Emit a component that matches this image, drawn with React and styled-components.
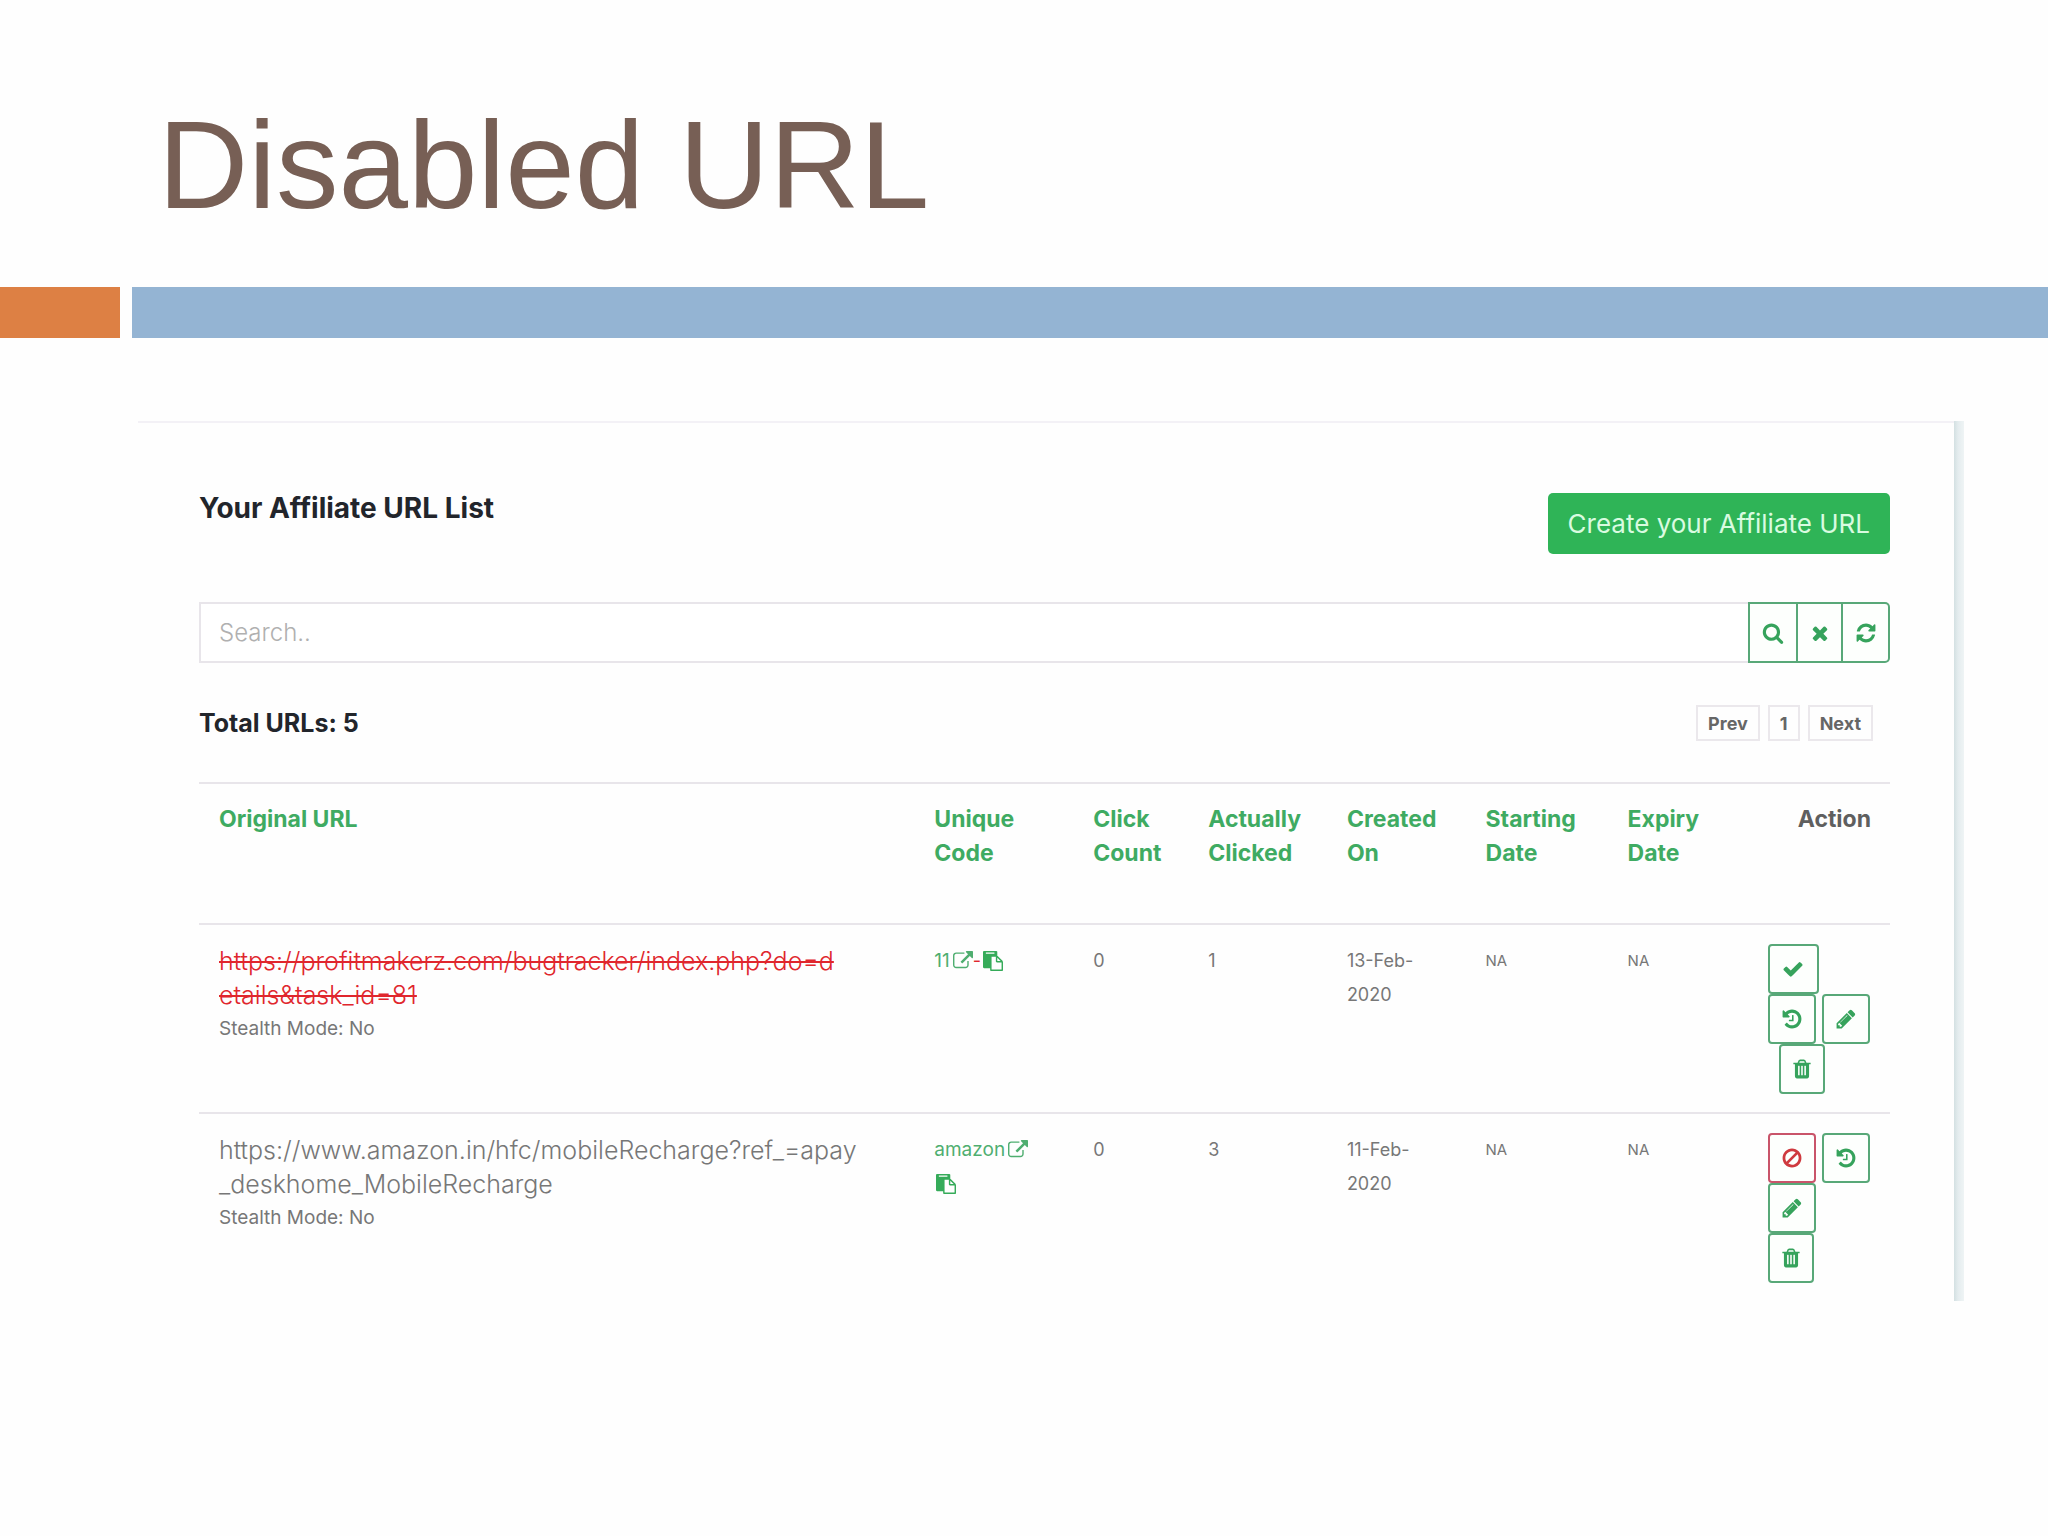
import React, { useState } from 'react';
import styled, { createGlobalStyle, css } from 'styled-components';

const GlobalStyle = createGlobalStyle`
  *, *::before, *::after {
    box-sizing: border-box;
  }

  body {
    margin: 0;
    background: #fefefe;
    color: #777777;
    font-family: Inter, 'Open Sans', sans-serif;
  }

  button, input {
    font-family: inherit;
    margin: 0;
  }
`;

const Title = styled.h1`
  margin: 0;
  padding: 93px 158px 50px;
  font-family: 'Liberation Sans', Arial, sans-serif;
  font-size: 125px;
  font-weight: 400;
  line-height: 144px;
  color: #775f55;
`;

const Stripe = styled.div`
  display: grid;
  grid-template-columns: 120px 1fr;
  gap: 12px;
  height: 51px;
`;

const StripeBlock = styled.div`
  background: ${props => props.$color};
`;

const Panel = styled.main`
  display: grid;
  grid-template-columns: 1fr 10px;
  margin: 83px 84px 60px 138px;
`;

const PanelContent = styled.section`
  padding: 70px 64px 0 61px;
  border-top: 2px solid #f3f1f6;
`;

const PanelEdge = styled.div`
  background: linear-gradient(to right, #d3e0e2, #e4ecee 40%, #eff4f5);
`;

const PanelHeader = styled.header`
  display: flex;
  align-items: flex-start;
  justify-content: space-between;
  margin-bottom: 48px;
`;

const Heading = styled.h2`
  margin: 0;
  font-size: ${props => props.$size}px;
  font-weight: 700;
  line-height: 30px;
  color: #22252b;
`;

const CreateButton = styled.button`
  height: 61px;
  padding: 0 20px;
  border: none;
  border-radius: 5px;
  background: #2fb457;
  color: #d9fbe0;
  font-size: 26px;
  cursor: pointer;
`;

const SearchBar = styled.form`
  display: flex;
  height: 61px;
  margin-bottom: 42px;
`;

const SearchInput = styled.input`
  flex: 1;
  min-width: 0;
  padding: 0 18px;
  border: 2px solid #e8e5ea;
  border-right: none;
  background: #ffffff;
  color: #555555;
  font-size: 24px;
  font-weight: 300;
  outline: none;

  &::placeholder {
    color: #b0b0b0;
    opacity: 1;
  }
`;

const SearchButton = styled.button`
  display: flex;
  align-items: center;
  justify-content: center;
  width: ${props => props.$width}px;
  padding: 0;
  border: 2px solid #58a878;
  border-left-width: ${props => (props.$first ? '2px' : '0')};
  border-radius: ${props => (props.$last ? '0 5px 5px 0' : '0')};
  background: #fdfffd;
  color: #36a35c;
  cursor: pointer;
`;

const Summary = styled.div`
  display: flex;
  align-items: center;
  justify-content: space-between;
  padding-right: 17px;
  margin-bottom: 41px;
`;

const Pager = styled.nav`
  display: flex;
  gap: 8px;
`;

const PageButton = styled.button`
  height: 36px;
  padding: 0 10px;
  border: 2px solid #ebe8ec;
  background: #fefefe;
  color: #666666;
  font-size: 18px;
  font-weight: 700;
  cursor: pointer;
`;

const Table = styled.table`
  width: 100%;
  table-layout: fixed;
  border-collapse: collapse;
`;

const Col = styled.col`
  width: ${props => props.$width};
`;

const HeadCell = styled.th`
  height: 141px;
  padding: 18px 19px 0 20px;
  border-top: 2px solid #e8e5ea;
  vertical-align: top;
  text-align: ${props => (props.$right ? 'right' : 'left')};
  color: ${props => (props.$right ? '#5f5f5f' : '#3fab62')};
  font-size: 23px;
  font-weight: 700;
  line-height: 34px;
`;

const Cell = styled.td`
  padding: 19px 0 18px 20px;
  border-top: 2px solid #e8e5ea;
  vertical-align: top;
  font-size: ${props => (props.$small ? '15px' : '18px')};
  line-height: 34px;
`;

const Url = styled.div`
  white-space: pre-line;
  font-size: 25px;
  font-weight: 300;

  ${props => props.$disabled && css`
    color: #e0262d;
    text-decoration: line-through;
    text-decoration-thickness: 2px;
  `}
`;

const StealthMode = styled.div`
  font-size: 19px;
`;

const CodeLink = styled.a`
  color: #4fae70;
  font-size: 19px;
  text-decoration: none;

  svg {
    margin-left: 3px;
  }
`;

const Dash = styled.span`
  color: #e0262d;
`;

const CopyButton = styled.button`
  padding: 0;
  margin-left: 2px;
  border: none;
  background: none;
  color: #35ab59;
  font-size: 19px;
  line-height: 34px;
  cursor: pointer;
`;

const Actions = styled.div`
  display: flex;
  flex-direction: column;
`;

const ActionLine = styled.div`
  display: flex;
  gap: 6px;
  padding-left: ${props => (props.$indent ? '11px' : '0')};
`;

const ActionButton = styled.button`
  display: flex;
  align-items: center;
  justify-content: center;
  width: ${props => props.$width}px;
  height: 50px;
  padding: 0;
  border: 2px solid ${props => (props.$danger ? '#c9546a' : '#58a878')};
  border-radius: 4px;
  background: #fdfffd;
  color: ${props => (props.$danger ? '#cf3a3f' : '#36a35c')};
  cursor: pointer;
`;

const IconSvg = styled.svg`
  width: ${props => props.$size}px;
  height: ${props => props.$size}px;
  fill: currentColor;
  vertical-align: -4px;
`;

const icons = {
  search: 'M1216 832q0-185-131.5-316.5t-316.5-131.5-316.5 131.5-131.5 316.5 131.5 316.5 316.5 131.5 316.5-131.5 131.5-316.5zm512 832q0 52-38 90t-90 38q-54 0-90-38l-343-342q-179 124-399 124-143 0-273.5-55.5t-225-150-150-225-55.5-273.5 55.5-273.5 150-225 225-150 273.5-55.5 273.5 55.5 225 150 150 225 55.5 273.5q0 220-124 399l343 343q37 37 37 90z',
  times: 'M1490 1322q0 40-28 68l-136 136q-28 28-68 28t-68-28l-294-294-294 294q-28 28-68 28t-68-28l-136-136q-28-28-28-68t28-68l294-294-294-294q-28-28-28-68t28-68l136-136q28-28 68-28t68 28l294 294 294-294q28-28 68-28t68 28l136 136q28 28 28 68t-28 68l-294 294 294 294q28 28 28 68z',
  refresh: 'M1639 1056q0 5-1 7-64 268-268 434.5t-478 166.5q-146 0-282.5-55t-243.5-157l-129 129q-19 19-45 19t-45-19-19-45v-448q0-26 19-45t45-19h448q26 0 45 19t19 45-19 45l-137 137q71 66 161 102t187 36q134 0 250-65t186-179q11-17 53-117 8-23 30-23h192q13 0 22.5 9.5t9.5 22.5zm25-800v448q0 26-19 45t-45 19h-448q-26 0-45-19t-19-45 19-45l138-138q-148-137-349-137-134 0-250 65t-186 179q-11 17-53 117-8 23-30 23h-199q-13 0-22.5-9.5t-9.5-22.5v-7q65-268 270-434.5t480-166.5q146 0 284 55.5t245 156.5l130-129q19-19 45-19t45 19 19 45z',
  check: 'M1671 566q0 40-28 68l-724 724-136 136q-28 28-68 28t-68-28l-136-136-362-362q-28-28-28-68t28-68l136-136q28-28 68-28t68 28l294 295 656-657q28-28 68-28t68 28l136 136q28 28 28 68z',
  history: 'M1664 896q0 156-61 298t-164 245-245 164-298 61q-172 0-327-72.5t-264-204.5q-7-10-6.5-22.5t8.5-20.5l137-138q10-9 25-9 16 2 23 12 73 95 179 147t225 52q104 0 198.5-40.5t163.5-109.5 109.5-163.5 40.5-198.5-40.5-198.5-109.5-163.5-163.5-109.5-198.5-40.5q-98 0-188 35.5t-160 101.5l137 138q31 30 14 69-17 40-59 40h-448q-26 0-45-19t-19-45v-448q0-42 40-59 39-17 69 14l130 129q107-101 244.5-156.5t284.5-55.5q156 0 298 61t245 164 164 245 61 298zm-640-288v448q0 14-9 23t-23 9h-320q-14 0-23-9t-9-23v-64q0-14 9-23t23-9h224v-352q0-14 9-23t23-9h64q14 0 23 9t9 23z',
  pencil: 'M491 1536l91-91-235-235-91 91v107h128v128h107zm523-928q0-22-22-22-10 0-17 7l-542 542q-7 7-7 17 0 22 22 22 10 0 17-7l542-542q7-7 7-17zm-54-192l416 416-832 832h-416v-416zm683 96q0 53-37 90l-166 166-416-416 166-165q36-38 90-38 53 0 91 38l235 234q37 39 37 91z',
  trash: 'M704 1376v-704q0-14-9-23t-23-9h-64q-14 0-23 9t-9 23v704q0 14 9 23t23 9h64q14 0 23-9t9-23zm256 0v-704q0-14-9-23t-23-9h-64q-14 0-23 9t-9 23v704q0 14 9 23t23 9h64q14 0 23-9t9-23zm256 0v-704q0-14-9-23t-23-9h-64q-14 0-23 9t-9 23v704q0 14 9 23t23 9h64q14 0 23-9t9-23zm-544-992h448l-48-117q-7-9-17-11h-317q-10 2-17 11zm928 32v64q0 14-9 23t-23 9h-96v948q0 83-47 143.5t-113 60.5h-832q-66 0-113-58.5t-47-141.5v-952h-96q-14 0-23-9t-9-23v-64q0-14 9-23t23-9h309l70-167q15-37 54-63t79-26h320q40 0 79 26t54 63l70 167h309q14 0 23 9t9 23z',
  ban: 'M1440 893q0-161-87-295l-754 753q137 89 297 89 111 0 211.5-43.5t173.5-116.5 116-174.5 43-212.5zm-999 299l755-754q-135-91-300-91-148 0-273 73t-198 199-73 274q0 162 89 299zm1223-299q0 157-61 300t-163.5 246-245 164-298.5 61-298.5-61-245-164-163.5-246-61-300 61-299.5 163.5-245.5 245-164 298.5-61 298.5 61 245 164 163.5 245.5 61 299.5z',
  external: 'M1408 928v320q0 119-84.5 203.5t-203.5 84.5h-832q-119 0-203.5-84.5t-84.5-203.5v-832q0-119 84.5-203.5t203.5-84.5h704q14 0 23 9t9 23v64q0 14-9 23t-23 9h-704q-66 0-113 47t-47 113v832q0 66 47 113t113 47h832q66 0 113-47t47-113v-320q0-14 9-23t23-9h64q14 0 23 9t9 23zm384-864v512q0 26-19 45t-45 19-45-19l-176-176-652 652q-10 10-23 10t-23-10l-114-114q-10-10-10-23t10-23l652-652-176-176q-19-19-19-45t19-45 45-19h512q26 0 45 19t19 45z',
  paste: 'M768 1664h896v-640h-416q-40 0-68-28t-28-68v-416h-384v1152zm256-1440v-64q0-13-9.5-22.5t-22.5-9.5h-704q-13 0-22.5 9.5t-9.5 22.5v64q0 13 9.5 22.5t22.5 9.5h704q13 0 22.5-9.5t9.5-22.5zm256 672h299l-299-299v299zm512 128v672q0 40-28 68t-68 28h-960q-40 0-68-28t-28-68v-160h-544q-40 0-68-28t-28-68v-1344q0-40 28-68t68-28h1088q40 0 68 28t28 68v328q21 13 36 28l408 408q28 28 48 76t20 88z',
};

const Icon = ({ name, size = 22 }) => (
  <IconSvg $size={size} viewBox="0 0 1792 1792" aria-hidden="true">
    <path d={icons[name]} />
  </IconSvg>
);

const columns = [
  { label: 'Original URL', width: '42.3%' },
  { label: 'Unique Code', width: '9.4%' },
  { label: 'Click Count', width: '6.8%' },
  { label: 'Actually Clicked', width: '8.2%' },
  { label: 'Created On', width: '8.2%' },
  { label: 'Starting Date', width: '8.4%' },
  { label: 'Expiry Date', width: '8.3%' },
  { label: 'Action', width: '8.4%', right: true },
];

const rows = [
  {
    url: 'https://profitmakerz.com/bugtracker/index.php?do=d\netails&task_id=81',
    disabled: true,
    code: '11',
    clicks: 0,
    clicked: 1,
    created: '13-Feb-2020',
    actions: [
      { buttons: [{ icon: 'check', label: 'Enable', width: 51 }] },
      {
        buttons: [
          { icon: 'history', label: 'Reset', width: 48 },
          { icon: 'pencil', label: 'Edit', width: 48 },
        ],
      },
      { indent: true, buttons: [{ icon: 'trash', label: 'Delete', width: 46 }] },
    ],
  },
  {
    url: 'https://www.amazon.in/hfc/mobileRecharge?ref_=apay\n_deskhome_MobileRecharge',
    disabled: false,
    code: 'amazon',
    clicks: 0,
    clicked: 3,
    created: '11-Feb-2020',
    actions: [
      {
        buttons: [
          { icon: 'ban', label: 'Disable', width: 48, danger: true },
          { icon: 'history', label: 'Reset', width: 48 },
        ],
      },
      { buttons: [{ icon: 'pencil', label: 'Edit', width: 48 }] },
      { buttons: [{ icon: 'trash', label: 'Delete', width: 46 }] },
    ],
  },
];

const UrlRow = ({ row }) => (
  <tr>
    <Cell>
      <Url $disabled={row.disabled}>{row.url}</Url>
      <StealthMode>Stealth Mode: No</StealthMode>
    </Cell>
    <Cell>
      <CodeLink href="#">
        {row.code}
        <Icon name="external" size={20} />
      </CodeLink>
      {row.disabled ? <Dash>-</Dash> : <br />}
      <CopyButton type="button" aria-label="Copy URL">
        <Icon name="paste" size={20} />
      </CopyButton>
    </Cell>
    <Cell>{row.clicks}</Cell>
    <Cell>{row.clicked}</Cell>
    <Cell>
      {row.created.slice(0, 7)}
      <br />
      {row.created.slice(7)}
    </Cell>
    <Cell $small>NA</Cell>
    <Cell $small>NA</Cell>
    <Cell>
      <Actions>
        {row.actions.map((line, i) => (
          <ActionLine key={i} $indent={line.indent}>
            {line.buttons.map(button => (
              <ActionButton
                key={button.icon}
                type="button"
                aria-label={button.label}
                $width={button.width}
                $danger={button.danger}
              >
                <Icon name={button.icon} />
              </ActionButton>
            ))}
          </ActionLine>
        ))}
      </Actions>
    </Cell>
  </tr>
);

const App = () => {
  const [query, setQuery] = useState('');

  return (
    <>
      <GlobalStyle />
      <Title>Disabled URL</Title>
      <Stripe>
        <StripeBlock $color="#dd8044" />
        <StripeBlock $color="#94b4d3" />
      </Stripe>
      <Panel>
        <PanelContent>
          <PanelHeader>
            <Heading $size={28}>Your Affiliate URL List</Heading>
            <CreateButton type="button">Create your Affiliate URL</CreateButton>
          </PanelHeader>
          <SearchBar onSubmit={e => e.preventDefault()}>
            <SearchInput
              type="text"
              aria-label="Search"
              placeholder="Search.."
              value={query}
              onChange={e => setQuery(e.target.value)}
            />
            <SearchButton type="submit" aria-label="Search" $width={50} $first>
              <Icon name="search" />
            </SearchButton>
            <SearchButton type="button" aria-label="Clear" $width={45} onClick={() => setQuery('')}>
              <Icon name="times" />
            </SearchButton>
            <SearchButton type="button" aria-label="Refresh" $width={47} $last>
              <Icon name="refresh" />
            </SearchButton>
          </SearchBar>
          <Summary>
            <Heading as="h3" $size={25}>Total URLs: 5</Heading>
            <Pager aria-label="Pages">
              <PageButton type="button">Prev</PageButton>
              <PageButton type="button">1</PageButton>
              <PageButton type="button">Next</PageButton>
            </Pager>
          </Summary>
          <Table>
            <colgroup>
              {columns.map(column => (
                <Col key={column.label} $width={column.width} />
              ))}
            </colgroup>
            <thead>
              <tr>
                {columns.map(column => (
                  <HeadCell key={column.label} scope="col" $right={column.right}>
                    {column.label}
                  </HeadCell>
                ))}
              </tr>
            </thead>
            <tbody>
              {rows.map(row => (
                <UrlRow key={row.code} row={row} />
              ))}
            </tbody>
          </Table>
        </PanelContent>
        <PanelEdge />
      </Panel>
    </>
  );
};

export default App;
